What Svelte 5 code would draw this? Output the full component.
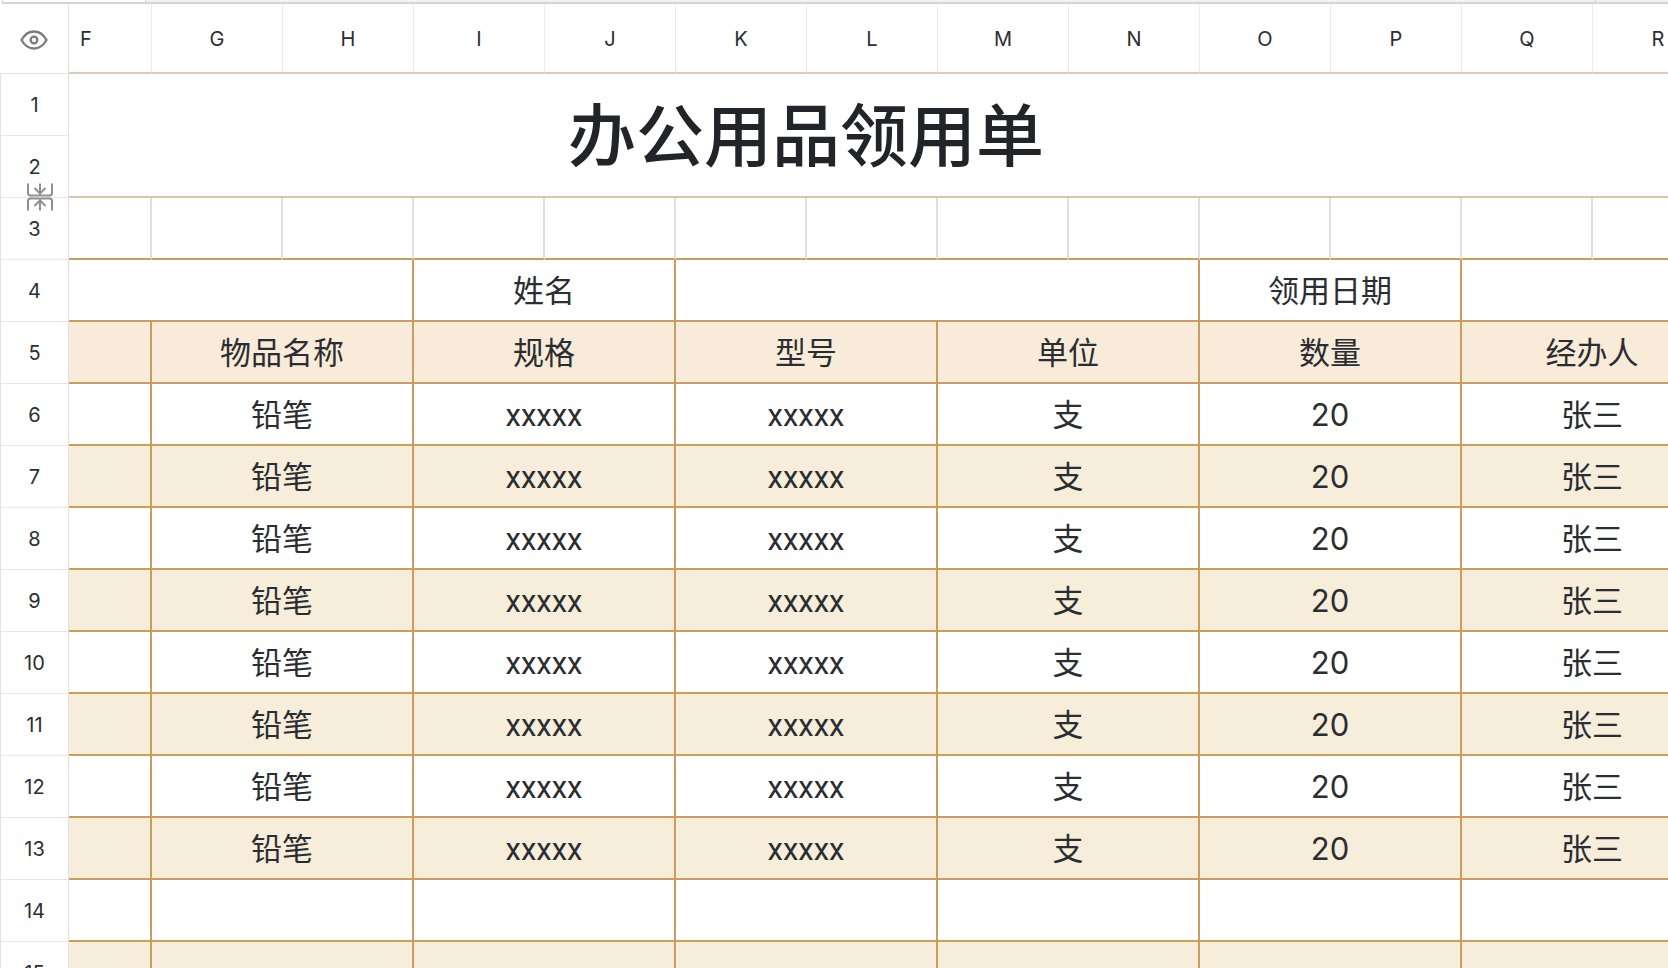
<script>
    let columns=["G","H","I","J","K","L","M","N","O","P","Q","R"];
    let headings=["物品名称","规格","型号","单位","数量","经办人"];
    let item=["铅笔","xxxxx","xxxxx","支","20","张三"];
    let rows=[];
    for(let n=6;n<=15;n++){
        rows.push({n:n,cells:n<14? item: ["","","","","",""]});
    }
</script>
<svelte:head>
    <title>办公用品领用单</title>
</svelte:head>
<main>
    <div class="topbar"><span class="namebox"></span><span class="formula"></span><span class="expand"></span></div>
    <table>
        <colgroup>
            <col class="numcol"/>
            <col class="firstcol"/>
            {#each columns as column}
                <col class="datacol"/>
            {/each}
        </colgroup>
        <thead>
            <tr>
                <th class="corner">
                    <button aria-label="显示">
                        <svg width="28" height="20" viewBox="0 0 28 20" fill="none" stroke="#7c7c7c" stroke-width="2.300">
                            <path d="M1.500 10C4.500 4.500 9 1.500 14 1.500S23.500 4.500 26.500 10C23.500 15.500 19 18.500 14 18.500S4.500 15.500 1.500 10Z"/>
                            <circle cx="14" cy="10" r="3.300"/>
                        </svg>
                    </button>
                </th>
                <th class="letter first">F</th>
                {#each columns as column}
                    <th class="letter">{column}</th>
                {/each}
            </tr>
        </thead>
        <tbody>
            <tr>
                <th class="num">1</th>
                <td class="title" colspan="12" rowspan="2">办公用品领用单</td>
                <td class="title" rowspan="2"></td>
            </tr>
            <tr>
                <th class="num">2
                    <button class="fold" aria-label="展开">
                        <svg width="28" height="30" viewBox="0 0 28 30" fill="none" stroke="#8f8f8f" stroke-width="2">
                            <path d="M2 1.500V11Q2 13.500 4.500 13.500H23.500Q26 13.500 26 11V1.500M14 1.500V11M8.500 6L14 11.500L19.500 6"/>
                            <path d="M2 28.500V19Q2 16.500 4.500 16.500H23.500Q26 16.500 26 19V28.500M14 28.500V19M8.500 24L14 18.500L19.500 24"/>
                        </svg>
                    </button>
                </th>
            </tr>
            <tr class="blank">
                <th class="num">3</th>
                <td></td>
                {#each columns as column}
                    <td></td>
                {/each}
            </tr>
            <tr>
                <th class="num">4</th>
                <td colspan="3"></td>
                <td colspan="2">姓名</td>
                <td colspan="4"></td>
                <td colspan="2">领用日期</td>
                <td colspan="2"></td>
            </tr>
            <tr class="headings">
                <th class="num">5</th>
                <td></td>
                {#each headings as heading}
                    <td colspan="2">{heading}</td>
                {/each}
            </tr>
            {#each rows as row}
                <tr class:odd={row.n%2===1}>
                    <th class="num">{row.n}</th>
                    <td></td>
                    {#each row.cells as cell,index}
                        <td colspan="2" class:code={index===1 || index===2}>{cell}</td>
                    {/each}
                </tr>
            {/each}
        </tbody>
    </table>
</main>
<style>
    :global(body){
        margin:0;
        background-color:white;
    }
    main{
        height:100vh;
        overflow:hidden;
        font-family:Inter,"Noto Sans CJK SC",sans-serif;
        color:#2b2e31;
    }
    .topbar{
        display:flex;
        box-sizing:border-box;
        height:4px;
        margin-left:2px;
        background-color:#f2f2f2;
        border-bottom:2px solid #d5d5d5;
        border-left:1px solid #d5d5d5;
    }
    .namebox{
        width:142px;
        background-color:white;
        border-right:1px solid #d5d5d5;
    }
    .formula{
        flex:1;
    }
    .expand{
        width:72px;
        border-left:1px solid #d5d5d5;
    }
    table{
        table-layout:fixed;
        width:1724px;
        border-collapse:separate;
        border-spacing:0;
    }
    .numcol{
        width:69px;
    }
    .firstcol{
        width:83px;
    }
    .datacol{
        width:131px;
    }
    th,td{
        box-sizing:border-box;
        height:62px;
        padding:0;
        text-align:center;
        vertical-align:middle;
    }
    td{
        padding-top:2px;
        font-size:31px;
        line-height:40px;
        border-right:2px solid #cb9c5c;
        border-bottom:2px solid #cb9c5c;
    }
    th{
        font-size:20px;
        line-height:24px;
        font-weight:400;
    }
    .corner,.letter{
        height:70px;
        padding-top:2px;
    }
    .corner{
        border-right:1px solid #e2e2e2;
        border-bottom:1px solid #e2e2e2;
    }
    .letter{
        border-right:1px solid #ebebeb;
        border-bottom:2px solid #dfcbb0;
    }
    .first{
        padding-left:11px;
        text-align:left;
    }
    .num{
        position:relative;
        border-left:1px solid #e2e2e2;
        border-right:1px solid #e2e2e2;
        border-bottom:1px solid #e8e8e8;
    }
    button{
        padding:0;
        border:none;
        background:none;
    }
    svg{
        display:block;
    }
    .corner button{
        display:block;
        margin:0 auto;
    }
    .fold{
        position:absolute;
        left:25px;
        bottom:-15px;
        z-index:1;
    }
    .code{
        padding-top:4px;
        font-family:Roboto,sans-serif;
    }
    /* the sheet is scrolled, so the merged cell starts left of the row numbers */
    .title{
        padding-right:50px;
        font-size:68px;
        font-weight:500;
        line-height:80px;
        color:#212529;
        border-right:none;
        border-bottom-color:#dbc7a3;
    }
    .blank td{
        border-right-color:#dedede;
    }
    .headings td{
        background-color:#f8ebd9;
    }
    .odd td{
        background-color:#f6eddb;
    }
</style>
